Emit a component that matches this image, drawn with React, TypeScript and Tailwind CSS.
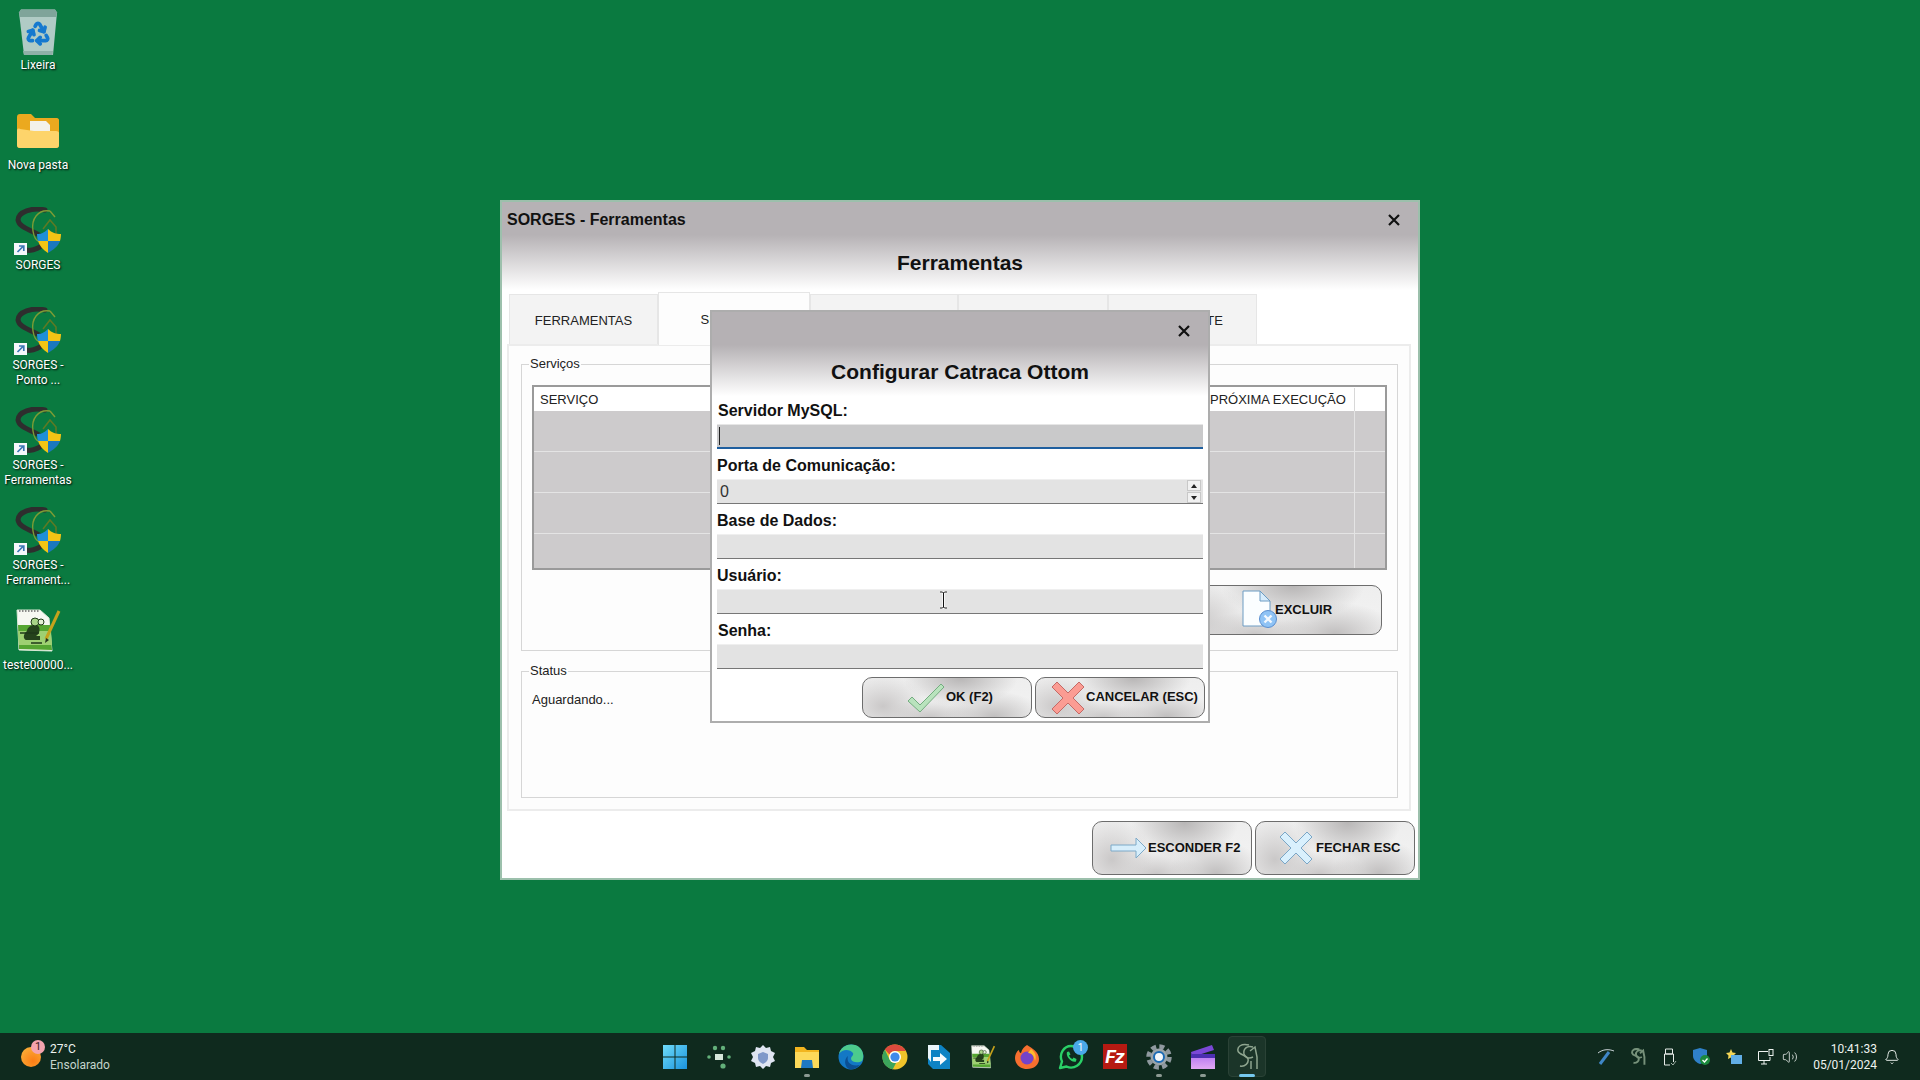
import React from 'react';
import { Bell, Recycle, Volume2 } from 'lucide-react';

const metal =
  'bg-[radial-gradient(ellipse_34%_72%_at_58%_0%,#b8b6b6,transparent),radial-gradient(ellipse_30%_66%_at_78%_100%,#c0bebe,transparent),radial-gradient(ellipse_26%_80%_at_12%_72%,#cac8c8,transparent),radial-gradient(ellipse_30%_46%_at_40%_100%,#c9c7c7,transparent),linear-gradient(#eeeeee,#f3f3f3)]';

const SorgesLogo = ({ shortcut = true }: { shortcut?: boolean }) => (
  <svg width="48" height="48" viewBox="0 0 48 48" fill="none">
    <path d="M31 3C18 0 4 5 4 13C5 21 18 23 25 28C31 33 29 39 24 41C20 43 16 44 12 43" stroke="#2e2e2e" strokeWidth="5" strokeLinecap="round" />
    <path d="M36 4C24 2 17 12 19 24C20 30 22 33 24 34" stroke="#7f9c35" strokeWidth="1.400" />
    <path d="M36 4L41 10" stroke="#7f9c35" strokeWidth="1.400" />
    <path d="M29 22L36 13L42 20V28" stroke="#5d7a24" strokeWidth="1.600" />
    <path d="M34 22C30 26 27 27 23 27C23 29 23.3 31.500 24 34L34 34Z" fill="#1f8fd8" />
    <path d="M34 22C38 26 42 27 47 27C47 29 46.700 31.500 46 34L34 34Z" fill="#f4c415" />
    <path d="M24 34C25.500 39 29 43 34 46L34 34Z" fill="#f4c415" />
    <path d="M46 34C44.500 39 39 43 34 46L34 34Z" fill="#1b78bd" />
    {shortcut && (
      <>
        <rect x="0" y="36" width="13" height="12" fill="#f4f8fb" />
        <path d="M3.500 45L9 39.500M5 39H9.800V44" stroke="#3a78b5" strokeWidth="1.700" />
      </>
    )}
  </svg>
);

const RecycleBin = () => (
  <svg width="48" height="48" viewBox="0 0 48 48" fill="none">
    <path d="M5 5.500L7 2.500H41L43 5.500L39 48H10Z" fill="#b0cbc5" />
    <path d="M5 5.500L7 2.500H41L43 5.500L42 10H6Z" fill="#7fa49a" />
    <path d="M9 44H39L38.500 48H10Z" fill="#8fb0a8" />
    <Recycle x={11} y={13} width={26} height={26} color="#1579cf" strokeWidth={3.4} />
  </svg>
);

const DesktopFolder = () => (
  <svg width="48" height="48" viewBox="0 0 48 48" fill="none">
    <path d="M3 10C3 8 4 7 6 7H17L21 11H43C44 11 45 12 45 13V38C45 40 44 41 42 41H6C4 41 3 40 3 38Z" fill="#eba91f" />
    <path d="M16 14H32L36 18V28H16Z" fill="#f3f1ea" />
    <path d="M3 24C3 22 4 21 6 22L20 24H42C44 24 45 25 45 26V38C45 40 44 41 42 41H6C4 41 3 40 3 38Z" fill="#fdd46b" />
  </svg>
);

const NotepadFile = ({ size = 48 }: { size?: number }) => (
  <svg width={size} height={size} viewBox="0 0 48 48" fill="none">
    <path d="M3 3H26L35 11L38 44L5 43Z" fill="#f6f8f2" stroke="#d9e8d5" strokeWidth="1" />
    <path d="M4 18H36L38 43L5 42Z" fill="#56a632" />
    <path d="M4 24H37L38 38H5Z" fill="#9ed072" />
    <path d="M5 4H26" stroke="#8a8a8a" strokeWidth="2" strokeDasharray="1.500 1.500" />
    <path d="M13 24C13 20 19 17 23 18C27 20 26 27 22 29H26V33H12C9 32 9 27 13 24Z" fill="#25421c" />
    <circle cx="21" cy="15" r="4" fill="#a8d488" stroke="#1e3a18" />
    <circle cx="27" cy="15" r="3" fill="#e3f0d4" stroke="#1e3a18" />
    <path d="M6 26H25M17 36H28" stroke="#1f381a" strokeWidth="1.500" />
    <path d="M32 32L45 4" stroke="#c5a21c" strokeWidth="3" />
    <path d="M31 36L32 31L35 33Z" fill="#24351c" />
  </svg>
);

const desktopItems: { label: string; icon: React.ReactNode }[] = [
  { label: 'Lixeira', icon: <RecycleBin /> },
  { label: 'Nova pasta', icon: <DesktopFolder /> },
  { label: 'SORGES', icon: <SorgesLogo /> },
  { label: 'SORGES - Ponto ...', icon: <SorgesLogo /> },
  { label: 'SORGES - Ferramentas', icon: <SorgesLogo /> },
  { label: 'SORGES - Ferrament...', icon: <SorgesLogo /> },
  { label: 'teste00000...', icon: <NotepadFile /> },
];

const CloseX = () => (
  <svg width="12" height="12" viewBox="0 0 12 12">
    <path d="M1 1L11 11M11 1L1 11" stroke="#111" strokeWidth="2.200" />
  </svg>
);

const CrossIcon = ({ fill, stroke }: { fill: string; stroke: string }) => (
  <svg width="34" height="34" viewBox="0 0 34 34">
    <path d="M1 6L6 1L17 12L28 1L33 6L22 17L33 28L28 33L17 22L6 33L1 28L12 17Z" fill={fill} stroke={stroke} strokeLinejoin="round" />
  </svg>
);

const CheckIcon = () => (
  <svg width="38" height="30" viewBox="0 0 38 30">
    <path d="M1 18L5 14L13 22L34 1L37 4L13 29Z" fill="#b9e3bd" stroke="#74ad80" strokeLinejoin="round" />
  </svg>
);

const ArrowIcon = () => (
  <svg width="37" height="22" viewBox="0 0 37 22">
    <path d="M1 8H26V1L36 11L26 21V14H1Z" fill="#d7eefb" stroke="#7da9c8" strokeLinejoin="round" />
  </svg>
);

const DeleteDocIcon = () => (
  <svg width="36" height="40" viewBox="0 0 36 40">
    <path d="M1 1H18L28 11V36H1Z" fill="#fbfeff" stroke="#6c9cc3" />
    <path d="M18 1V11H28Z" fill="#d7ecfb" stroke="#6c9cc3" />
    <circle cx="26" cy="29" r="8.500" fill="#8fc3f5" stroke="#5b8fd0" />
    <path d="M22.500 25.500L29.500 32.500M29.500 25.500L22.500 32.500" stroke="#f2f8fe" strokeWidth="2.400" />
  </svg>
);

const Field = ({ label, focused, spin, value, inset }: { label: string; focused?: boolean; spin?: boolean; value?: string; inset?: boolean }) => (
  <div>
    <div className={inset ? 'flex h-[26px] items-center pl-px text-[16px] font-bold text-[#111]' : 'flex h-[26px] items-center text-[16px] font-bold text-[#111]'}>{label}</div>
    {focused ? (
      <div className="flex h-[25px] items-center border-b-2 border-t border-[#1f5f9f] border-t-[#e6e6e6] bg-[#c9c9ca] pl-[2px]">
        <div className="h-[18px] w-px bg-[#222]" />
      </div>
    ) : (
      <div className="flex h-[25px] items-center justify-between border-b border-t border-b-[#777777] border-t-[#efefef] bg-[#e3e3e3] pl-[3px] pr-[2px] text-[16px] text-[#333]">
        <span>{value}</span>
        {spin && (
          <div className="flex flex-col gap-px">
            <div className="flex h-[11px] w-[14px] items-center justify-center border border-[#c8c8c8] bg-[#f1f1f1]">
              <div className="h-0 w-0 border-x-[3px] border-b-[4px] border-x-transparent border-b-[#222]" />
            </div>
            <div className="flex h-[11px] w-[14px] items-center justify-center border border-[#c8c8c8] bg-[#f1f1f1]">
              <div className="h-0 w-0 border-x-[3px] border-t-[4px] border-x-transparent border-t-[#222]" />
            </div>
          </div>
        )}
      </div>
    )}
  </div>
);

const tabs = [
  { label: 'FERRAMENTAS', width: 'w-[149px]' },
  { label: 'SERVIÇOS', width: 'w-[152px]', active: true },
  { label: 'CATRACA', width: 'w-[148px]' },
  { label: 'RELÓGIO', width: 'w-[150px]' },
  { label: 'ASSISTENTE', width: 'w-[149px]' },
];

const MainWindow = () => (
  <div className="absolute left-[500px] top-[200px] flex h-[680px] w-[920px] flex-col border-2 border-[#9cc0ac] bg-[linear-gradient(#b6b2b5_0,#b6b2b5_33px,#ffffff_88px)] text-[#222]">
    <div className="flex h-[36px] shrink-0 items-center justify-between pl-[5px] pr-[18px]">
      <span className="text-[16px] font-bold text-[#111]">SORGES - Ferramentas</span>
      <CloseX />
    </div>
    <div className="flex h-[50px] shrink-0 items-center justify-center text-[21px] font-bold text-[#111]">Ferramentas</div>
    <div className="ml-[7px] flex h-[56px] shrink-0 items-end">
      {tabs.map((tab) => (
        <div
          key={tab.label}
          className={
            tab.active
              ? `${tab.width} relative z-10 -mb-px flex h-[53px] items-center justify-center border-x border-t border-[#e6e6e6] bg-[#fdfdfd] pt-[2px] text-[13px]`
              : `${tab.width} flex h-[50px] items-center justify-center border-x border-t border-[#e6e6e6] bg-[#f3f3f3] pt-[2px] text-[13px]`
          }
        >
          {tab.label}
        </div>
      ))}
    </div>
    <div className="ml-[5px] flex h-[467px] w-[904px] shrink-0 flex-col gap-[12px] border-2 border-[#ececec] bg-[#fdfdfd] pl-[12px] pt-[10px]">
      <fieldset className="h-[295px] w-[877px] border border-[#d6d6d6] px-[10px]">
        <legend className="-ml-[3px] px-px text-[13px] leading-[16px]">Serviços</legend>
        <div className="mt-[13px] flex h-[185px] flex-col border-2 border-[#9a9a9a] bg-[#cdcbcc]">
          <div className="grid h-[24px] shrink-0 grid-cols-[672px_148px_1fr] bg-white pt-px text-[13px]">
            <span className="flex items-center pl-[6px]">SERVIÇO</span>
            <span className="flex items-center pl-[4px]">PRÓXIMA EXECUÇÃO</span>
            <span className="border-l border-[#d8d8d8]" />
          </div>
          <div className="grid flex-1 grid-cols-[820px_1fr] grid-rows-[41px_41px_41px_1fr]">
            {[0, 1, 2, 3].map((row) => (
              <React.Fragment key={row}>
                <div className={row < 3 ? 'border-b border-[#e4e4e4]' : ''} />
                <div className={row < 3 ? 'border-b border-l border-[#e4e4e4]' : 'border-l border-[#e4e4e4]'} />
              </React.Fragment>
            ))}
          </div>
        </div>
        <div className="mt-[15px] flex justify-end pr-[5px]">
          <div className={`flex h-[50px] w-[212px] items-center rounded-[10px] border border-[#6d6d6d] pl-[71px] ${metal}`}>
            <DeleteDocIcon />
            <span className="-ml-[3px] text-[13px] font-bold text-[#111]">EXCLUIR</span>
          </div>
        </div>
      </fieldset>
      <fieldset className="h-[135px] w-[877px] border border-[#d6d6d6] px-[10px]">
        <legend className="-ml-[3px] px-px text-[13px] leading-[16px]">Status</legend>
        <div className="mt-[13px] text-[13px] leading-[16px]">Aguardando...</div>
      </fieldset>
    </div>
    <div className="mt-[10px] flex justify-end gap-[3px] pr-[3px]">
      <div className={`flex h-[54px] w-[160px] items-center rounded-[10px] border border-[#6d6d6d] pl-[17px] ${metal}`}>
        <ArrowIcon />
        <span className="ml-px text-[13px] font-bold text-[#111]">ESCONDER F2</span>
      </div>
      <div className={`flex h-[54px] w-[160px] items-center rounded-[10px] border border-[#6d6d6d] pl-[23px] ${metal}`}>
        <CrossIcon fill="#d9f0fd" stroke="#7aa6c6" />
        <span className="ml-[3px] text-[13px] font-bold text-[#111]">FECHAR ESC</span>
      </div>
    </div>
  </div>
);

const ConfigDialog = () => (
  <div className="absolute left-[710px] top-[310px] z-20 flex h-[413px] w-[500px] flex-col border-2 border-[#adadad] bg-[linear-gradient(#b5b1b4_0,#b5b1b4_33px,#ffffff_84px)]">
    <div className="flex h-[38px] shrink-0 items-center justify-end pr-[18px]">
      <CloseX />
    </div>
    <div className="flex h-[44px] shrink-0 items-center justify-center text-[21px] font-bold text-[#111]">Configurar Catraca Ottom</div>
    <div className="flex flex-col gap-[4px] pl-[5px] pr-[5px] pt-[4px]">
      <Field label="Servidor MySQL:" focused inset />
      <Field label="Porta de Comunicação:" spin value="0" />
      <Field label="Base de Dados:" />
      <Field label="Usuário:" />
      <Field label="Senha:" inset />
    </div>
    <div className="mt-[8px] flex justify-end gap-[3px] pr-[3px]">
      <div className={`flex h-[41px] w-[170px] items-center rounded-[10px] border border-[#6d6d6d] pl-[44px] ${metal}`}>
        <CheckIcon />
        <span className="mb-[2px] ml-px text-[13px] font-bold text-[#111]">OK (F2)</span>
      </div>
      <div className={`flex h-[41px] w-[170px] items-center rounded-[10px] border border-[#6d6d6d] pl-[15px] ${metal}`}>
        <CrossIcon fill="#fb9c93" stroke="#c46a66" />
        <span className="mb-[2px] ml-[1px] text-[13px] font-bold text-[#111]">CANCELAR (ESC)</span>
      </div>
    </div>
  </div>
);

const IBeam = () => (
  <svg className="absolute left-[939px] top-[591px] z-30" width="9" height="18" viewBox="0 0 9 18" fill="none">
    <path d="M1 1H3.500L4.500 2L5.500 1H8M1 17H3.500L4.500 16L5.500 17H8M4.500 2V16" stroke="#fff" strokeWidth="2.400" />
    <path d="M1 1H3.500L4.500 2L5.500 1H8M1 17H3.500L4.500 16L5.500 17H8M4.500 2V16" stroke="#111" strokeWidth="1" />
  </svg>
);

const Win = () => (
  <svg width="24" height="24" viewBox="0 0 24 24">
    <defs>
      <linearGradient id="wing" x1="0" y1="0" x2="1" y2="1">
        <stop offset="0" stopColor="#6fdcf9" />
        <stop offset="1" stopColor="#1a93dd" />
      </linearGradient>
    </defs>
    <path d="M0 0H11.500V11.500H0ZM12.500 0H24V11.500H12.500ZM0 12.500H11.500V24H0ZM12.500 12.500H24V24H12.500Z" fill="url(#wing)" />
  </svg>
);
const Dots = () => (
  <svg width="24" height="24" viewBox="0 0 24 24" fill="#63b07a">
    <circle cx="8" cy="3" r="2.200" /><circle cx="16" cy="3" r="2.200" />
    <circle cx="2" cy="12" r="1.800" /><circle cx="22" cy="12" r="1.800" />
    <circle cx="16" cy="21" r="2.600" />
    <rect x="8" y="9" width="8" height="6" fill="#d6e6da" />
  </svg>
);
const GearShield = () => (
  <svg width="24" height="26" viewBox="0 0 24 26">
    <path d="M12 1L15 4L19 3L20 7L24 9L22 13L24 17L20 19L19 23L15 22L12 25L9 22L5 23L4 19L0 17L2 13L0 9L4 7L5 3L9 4Z" fill="#dfe5f2" />
    <path d="M12 8L17 10V14C17 17 14 19 12 20C10 19 7 17 7 14V10Z" fill="#7f98c9" />
  </svg>
);
const TaskFolder = () => (
  <svg width="26" height="24" viewBox="0 0 26 24">
    <path d="M1 2H10L13 5H25V22H1Z" fill="#f2b51f" />
    <path d="M1 7H25V23H1Z" fill="#fcd95a" />
    <path d="M8 15H18L19 23H7Z" fill="#1f78c1" />
  </svg>
);
const Edge = () => (
  <svg width="26" height="26" viewBox="0 0 26 26">
    <circle cx="13" cy="13" r="12.500" fill="#1378c5" />
    <path d="M1 10C3 1 14 -2 21 3C26 7 26 14 24 17C21 19 14 19 13 15C13 12 16 12 15 9C12 5 4 5 1 10Z" fill="#4ccb8d" />
    <path d="M11 25C6 22 6 15 10 12C8 18 13 23 22 21C19 24 15 26 11 25Z" fill="#0b4f93" />
  </svg>
);
const Chrome = () => (
  <svg width="26" height="26" viewBox="0 0 26 26">
    <circle cx="13" cy="13" r="12.500" fill="#efc42a" />
    <path d="M13 .5A12.500 12.500 0 0 1 24 7L13 7A6 6 0 0 0 7.500 10.500L2.800 5.500A12.500 12.500 0 0 1 13 .5Z" fill="#dc4a3d" />
    <path d="M2.800 5.500L7.800 16A6 6 0 0 0 14 19L10.800 25.300A12.500 12.500 0 0 1 2.800 5.500Z" fill="#3ca55c" />
    <circle cx="13" cy="13" r="6" fill="#fff" />
    <circle cx="13" cy="13" r="4.600" fill="#3f8bea" />
  </svg>
);
const SendTo = () => (
  <svg width="24" height="26" viewBox="0 0 24 26">
    <path d="M1 1H14L23 9V25H6L1 20Z" fill="#0d83c4" />
    <path d="M1 1H12V6H4V18L1 14Z" fill="#eaf6fb" />
    <path d="M6 13H13V9L20 15L13 21V17H6Z" fill="#f6fbfd" />
  </svg>
);
const Firefox = () => (
  <svg width="26" height="26" viewBox="0 0 26 26">
    <path d="M13 1C18 4 25 8 25 15C25 21 20 25 13 25C6 25 1 20 1 14C1 10 3 7 5 6C5 8 6 9 7 9C8 5 10 3 13 1Z" fill="#f66f2f" />
    <circle cx="13" cy="14" r="6.500" fill="#7443c9" />
    <path d="M17 5C21 8 23 12 21 17C20 12 18 9 14 9Z" fill="#fdbb2d" />
  </svg>
);
const WhatsApp = () => (
  <svg width="26" height="26" viewBox="0 0 26 26" fill="none">
    <path d="M2 24L4 17.500C.5 10 6 2 13 2C19.500 2 24 7 24 13C24 20 16 26 8.500 22.500Z" stroke="#2ad067" strokeWidth="2.400" strokeLinejoin="round" />
    <path d="M9 8C7.500 12 13 19 18 17.500L18.500 15L15.500 13.500L14.500 15C13 14.500 11.500 13 11 11.500L12.500 10.500L11 7.500Z" fill="#2ad067" />
  </svg>
);
const GearRing = () => (
  <svg width="26" height="26" viewBox="0 0 26 26" fill="none">
    <circle cx="13" cy="13" r="10.500" stroke="#8f999f" strokeWidth="4.500" strokeDasharray="5 3.250" />
    <circle cx="13" cy="13" r="8.500" fill="#9aa4aa" />
    <circle cx="13" cy="13" r="5" fill="#f4f8fb" stroke="#1b6bb5" strokeWidth="2" />
  </svg>
);
const Clipchamp = () => (
  <svg width="26" height="26" viewBox="0 0 26 26">
    <defs>
      <linearGradient id="clip" x1="0" y1="0" x2="0" y2="1">
        <stop offset="0" stopColor="#b274f0" />
        <stop offset="1" stopColor="#e2a8f4" />
      </linearGradient>
    </defs>
    <path d="M1 8L22 1L24 6L2 13Z" fill="#7b48d6" />
    <path d="M1 10H25V25H1Z" fill="url(#clip)" />
    <path d="M1 10H25V14H1Z" fill="#4c2fb0" />
  </svg>
);
const SorgesTask = ({ color = '#8ea58f' }: { color?: string }) => (
  <svg width="24" height="28" viewBox="0 0 24 28" fill="none" stroke={color} strokeWidth="1.500">
    <path d="M14 2C6 0 2 4 3 8C4 12 12 12 13 16C14 20 10 24 5 23" />
    <path d="M18 4C12 2 8 6 9 11C10 15 14 16 18 14" />
    <path d="M15 8L20 4L22 14V26" />
    <path d="M16 18V26" />
  </svg>
);
const NotepadTask = () => <NotepadFile size={26} />;
const FileZilla = () => (
  <div className="flex h-[25px] w-[24px] items-center justify-center bg-[#b61a12] text-[19px] font-bold italic text-white">Fz</div>
);

const taskItems: { key: string; icon: React.ReactNode; open?: boolean; active?: boolean; badge?: boolean }[] = [
  { key: 'start', icon: <Win /> },
  { key: 'dots', icon: <Dots /> },
  { key: 'gearshield', icon: <GearShield /> },
  { key: 'folder', icon: <TaskFolder />, open: true },
  { key: 'edge', icon: <Edge /> },
  { key: 'chrome', icon: <Chrome /> },
  { key: 'sendto', icon: <SendTo /> },
  { key: 'notepad', icon: <NotepadTask /> },
  { key: 'firefox', icon: <Firefox /> },
  { key: 'whatsapp', icon: <WhatsApp />, badge: true },
  { key: 'filezilla', icon: <FileZilla /> },
  { key: 'settings', icon: <GearRing />, open: true },
  { key: 'clipchamp', icon: <Clipchamp />, open: true },
  { key: 'sorges', icon: <SorgesTask />, active: true },
];

const Taskbar = () => (
  <div className="grid h-[47px] shrink-0 grid-cols-[1fr_auto_1fr] bg-[#0f2a1e] font-['Roboto',sans-serif] text-[12px] leading-[16px] text-[#eef3f0]">
    <div className="flex items-center gap-[9px] pl-[21px]">
      <div className="relative h-[20px] w-[20px] rounded-full bg-[radial-gradient(circle_at_60%_70%,#fb7d15,#f9b83f)]">
        <div className="absolute -right-[4px] -top-[7px] flex h-[14px] w-[14px] items-center justify-center rounded-full bg-[#f4a4ae] text-[11px] text-[#3a1d22]">1</div>
      </div>
      <div>
        <div>27°C</div>
        <div className="text-[#c4d4cc]">Ensolarado</div>
      </div>
    </div>
    <div className="ml-[2px] flex">
      {taskItems.map((item) => (
        <div key={item.key} className="relative flex w-[44px] items-center justify-center">
          {item.active && <div className="absolute inset-x-[3px] inset-y-[3px] rounded-[4px] border border-[#2a4236] bg-[#1b3529]" />}
          <div className="relative flex">{item.icon}</div>
          {item.badge && (
            <div className="absolute left-[24px] top-[7px] flex h-[15px] w-[15px] items-center justify-center rounded-full bg-[#4aa8e8] text-[10px] text-white">1</div>
          )}
          {item.open && <div className="absolute bottom-[3px] h-[3px] w-[6px] rounded-full bg-[#8c9a93]" />}
          {item.active && <div className="absolute bottom-[3px] h-[3px] w-[16px] rounded-full bg-[#76c9ef]" />}
        </div>
      ))}
    </div>
    <div className="flex items-center justify-end pr-[13px]">
      <div className="flex w-[32px] justify-center">
        <svg width="18" height="18" viewBox="0 0 18 18" fill="none">
          <path d="M1 5C6 1 12 1 17 3" stroke="#c8d2d6" />
          <path d="M3 16L12 4" stroke="#3f86c6" strokeWidth="3" />
        </svg>
      </div>
      <div className="flex w-[32px] justify-center"><svg width="16" height="18" viewBox="0 0 24 28" fill="none" stroke="#76917a" strokeWidth="3"><path d="M14 2C6 0 2 4 3 8C4 12 12 12 13 16C14 20 10 24 5 23" /><path d="M18 4C12 2 8 6 9 11C10 15 14 16 18 14" /><path d="M15 8L20 4L22 14V26" /></svg></div>
      <div className="flex w-[32px] justify-center">
        <svg width="14" height="18" viewBox="0 0 14 18" fill="none" stroke="#e6ebe8">
          <path d="M2.500 1H9.500V6H2.500ZM1.500 6H10.500V14M1.500 6V17H7" />
          <path d="M8 15L10 17L13 13" stroke="#9fb0a6" />
        </svg>
      </div>
      <div className="flex w-[32px] justify-center">
        <svg width="18" height="18" viewBox="0 0 18 18">
          <path d="M7 0L14 2V8C14 12 10 15 7 16C4 15 0 12 0 8V2Z" fill="#2f80c8" />
          <circle cx="12" cy="12" r="5" fill="#1c8a3d" />
          <path d="M9.500 12L11.500 14L14.500 10.500" fill="none" stroke="#fff" strokeWidth="1.300" />
        </svg>
      </div>
      <div className="flex w-[32px] justify-center">
        <svg width="16" height="16" viewBox="0 0 16 16">
          <path d="M5 0L6.500 3.500L10 4L7.500 6.500L8 10L5 8.500L2 10L2.500 6.500L0 4L3.500 3.500Z" fill="#f4d656" />
          <rect x="5" y="6" width="11" height="9" fill="#61aee6" />
        </svg>
      </div>
      <div className="flex w-[32px] justify-center">
        <svg width="16" height="16" viewBox="0 0 16 16" fill="none" stroke="#eef3f0">
          <path d="M10 2.500H.5V11.500H12V8M6 11.500V15M3 15H9" />
          <rect x="11" y=".5" width="4" height="6" />
        </svg>
      </div>
      <div className="flex w-[16px] justify-center"><Volume2 size={16} strokeWidth={1.3} color="#dfe6e2" /></div>
      <div className="w-[79px] text-right">
        <div>10:41:33</div>
        <div>05/01/2024</div>
      </div>
      <div className="flex w-[30px] justify-center"><Bell size={16} strokeWidth={1.4} color="#eef3f0" /></div>
    </div>
  </div>
);

const App: React.FC = () => {
  return (
    <div className="relative flex h-[1080px] w-[1920px] flex-col overflow-hidden bg-[#0a7a40] font-['Liberation_Sans',Arial,sans-serif]">
      <div className="flex-1 pt-[5px]">
        <div className="flex w-[76px] flex-col">
          {desktopItems.map((item) => (
            <div key={item.label} className="flex h-[100px] flex-col items-center pt-[2px]">
              <div className="flex h-[48px] w-[48px]">{item.icon}</div>
              <div className="mt-[3px] text-center font-['Roboto',sans-serif] text-[12px] leading-[15px] text-white [text-shadow:1px_1px_2px_#000]">{item.label}</div>
            </div>
          ))}
        </div>
      </div>
      <Taskbar />
      <MainWindow />
      <ConfigDialog />
      <IBeam />
    </div>
  );
};

export default App;
